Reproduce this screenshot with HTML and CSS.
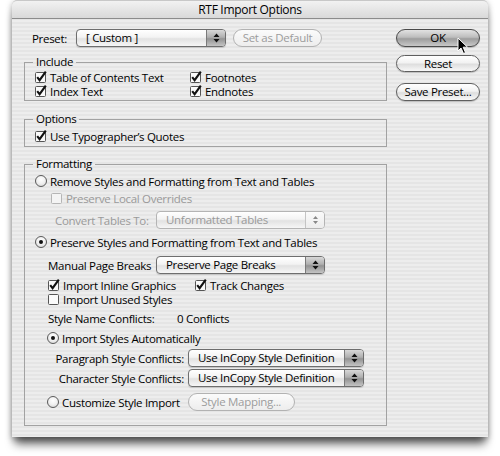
FILE: index.html
```html
<!DOCTYPE html>
<html>
<head>
<meta charset="utf-8">
<title>RTF Import Options</title>
<link rel="stylesheet" href="styles.css">
</head>
<body>
<div class="window">
  <div class="titlebar">RTF Import Options</div>
  <div class="content">
    <div class="left">
      <div class="preset-row">
        <span class="preset-label">Preset:</span>
        <div class="popup popup-preset"><span class="popup-text">[ Custom ]</span><span class="popup-arrows"><svg width="7" height="10" viewBox="0 0 7 10"><path d="M3.5 0.5 L6.5 4 L0.5 4 Z M0.5 6 L6.5 6 L3.5 9.5 Z" fill="#111"/></svg></span></div>
        <div class="btn btn-disabled btn-default">Set as Default</div>
      </div>

      <fieldset class="group group-include">
        <legend>Include</legend>
        <div class="row r14 first1">
          <div class="opt col-include"><svg class="cb" width="12" height="12" viewBox="0 0 12 12"><rect x="0.5" y="1.5" width="10" height="10" rx="1" fill="#fafafa" stroke="#555"/><path d="M2.2 6.2 L4.6 9.2 L10.8 0.6" fill="none" stroke="#111" stroke-width="2.1"/></svg><span>Table of Contents Text</span></div>
          <div class="opt"><svg class="cb" width="12" height="12" viewBox="0 0 12 12"><rect x="0.5" y="1.5" width="10" height="10" rx="1" fill="#fafafa" stroke="#555"/><path d="M2.2 6.2 L4.6 9.2 L10.8 0.6" fill="none" stroke="#111" stroke-width="2.1"/></svg><span>Footnotes</span></div>
        </div>
        <div class="row r14">
          <div class="opt col-include"><svg class="cb" width="12" height="12" viewBox="0 0 12 12"><rect x="0.5" y="1.5" width="10" height="10" rx="1" fill="#fafafa" stroke="#555"/><path d="M2.2 6.2 L4.6 9.2 L10.8 0.6" fill="none" stroke="#111" stroke-width="2.1"/></svg><span>Index Text</span></div>
          <div class="opt"><svg class="cb" width="12" height="12" viewBox="0 0 12 12"><rect x="0.5" y="1.5" width="10" height="10" rx="1" fill="#fafafa" stroke="#555"/><path d="M2.2 6.2 L4.6 9.2 L10.8 0.6" fill="none" stroke="#111" stroke-width="2.1"/></svg><span>Endnotes</span></div>
        </div>
      </fieldset>

      <fieldset class="group group-options">
        <legend>Options</legend>
        <div class="row r14 first3">
          <div class="opt"><svg class="cb" width="12" height="12" viewBox="0 0 12 12"><rect x="0.5" y="1.5" width="10" height="10" rx="1" fill="#fafafa" stroke="#555"/><path d="M2.2 6.2 L4.6 9.2 L10.8 0.6" fill="none" stroke="#111" stroke-width="2.1"/></svg><span>Use Typographer’s Quotes</span></div>
        </div>
      </fieldset>

      <fieldset class="group group-format">
        <legend>Formatting</legend>
        <div class="row r14 first3">
          <div class="opt"><span class="radio"></span><span class="rtext">Remove Styles and Formatting from Text and Tables</span></div>
        </div>
        <div class="row r14 g3 ind16">
          <div class="opt disabled"><svg class="cb" width="12" height="12" viewBox="0 0 12 12"><rect x="0.5" y="1.5" width="10" height="10" rx="1" fill="#f4f4f4" stroke="#b5b5b5"/></svg><span>Preserve Local Overrides</span></div>
        </div>
        <div class="row r18 g6">
          <span class="flabel ind20 disabled">Convert Tables To:</span>
          <div class="popup popup-wide popup-disabled"><span class="popup-text">Unformatted Tables</span><span class="popup-arrows"><svg width="7" height="10" viewBox="0 0 7 10"><path d="M3.5 1 L6 4 L1 4 Z M1 6 L6 6 L3.5 9 Z" fill="#888"/></svg></span></div>
        </div>
        <div class="row r14 g6">
          <div class="opt"><span class="radio on"></span><span class="rtext">Preserve Styles and Formatting from Text and Tables</span></div>
        </div>
        <div class="row r18 g7">
          <span class="flabel ind13">Manual Page Breaks</span>
          <div class="popup popup-wide"><span class="popup-text">Preserve Page Breaks</span><span class="popup-arrows"><svg width="7" height="10" viewBox="0 0 7 10"><path d="M3.5 0.5 L6.5 4 L0.5 4 Z M0.5 6 L6.5 6 L3.5 9.5 Z" fill="#111"/></svg></span></div>
        </div>
        <div class="row r14 g4 ind13">
          <div class="opt col-graphics"><svg class="cb" width="12" height="12" viewBox="0 0 12 12"><rect x="0.5" y="1.5" width="10" height="10" rx="1" fill="#fafafa" stroke="#555"/><path d="M2.2 6.2 L4.6 9.2 L10.8 0.6" fill="none" stroke="#111" stroke-width="2.1"/></svg><span>Import Inline Graphics</span></div>
          <div class="opt"><svg class="cb" width="12" height="12" viewBox="0 0 12 12"><rect x="0.5" y="1.5" width="10" height="10" rx="1" fill="#fafafa" stroke="#555"/><path d="M2.2 6.2 L4.6 9.2 L10.8 0.6" fill="none" stroke="#111" stroke-width="2.1"/></svg><span>Track Changes</span></div>
        </div>
        <div class="row r14 ind13">
          <div class="opt"><svg class="cb" width="12" height="12" viewBox="0 0 12 12"><rect x="0.5" y="1.5" width="10" height="10" rx="1" fill="#fafafa" stroke="#555"/></svg><span>Import Unused Styles</span></div>
        </div>
        <div class="row r14 g5 ind13">
          <span class="conf-label">Style Name Conflicts:</span><span>0 Conflicts</span>
        </div>
        <div class="row r14 g6 ind12">
          <div class="opt"><span class="radio on"></span><span class="rtext">Import Styles Automatically</span></div>
        </div>
        <div class="row r18 g4">
          <span class="rlabel">Paragraph Style Conflicts:</span>
          <div class="popup popup-style"><span class="popup-text">Use InCopy Style Definition</span><span class="popup-arrows"><svg width="7" height="10" viewBox="0 0 7 10"><path d="M3.5 0.5 L6.5 4 L0.5 4 Z M0.5 6 L6.5 6 L3.5 9.5 Z" fill="#111"/></svg></span></div>
        </div>
        <div class="row r18 g2">
          <span class="rlabel">Character Style Conflicts:</span>
          <div class="popup popup-style"><span class="popup-text">Use InCopy Style Definition</span><span class="popup-arrows"><svg width="7" height="10" viewBox="0 0 7 10"><path d="M3.5 0.5 L6.5 4 L0.5 4 Z M0.5 6 L6.5 6 L3.5 9.5 Z" fill="#111"/></svg></span></div>
        </div>
        <div class="row r18 g6 ind12">
          <div class="opt col-custom"><span class="radio"></span><span class="rtext">Customize Style Import</span></div>
          <div class="btn btn-disabled btn-mapping">Style Mapping...</div>
        </div>
      </fieldset>
    </div>

    <div class="right">
      <div class="btn btn-primary btn-ok">OK</div>
      <div class="btn btn-reset">Reset</div>
      <div class="btn btn-save">Save Preset...</div>
    </div>
  </div>
  <svg class="cursor" width="12" height="18" viewBox="0 0 12 18"><path d="M1 1 L1 14 L4 11 L6.5 16.5 L8.5 15.6 L6.2 10.2 L10.5 10.2 Z" fill="#000" stroke="#fff" stroke-width="1"/></svg>
</div>
</body>
</html>
```
FILE: styles.css
```css
html, body {
  margin: 0;
  padding: 0;
}
body {
  width: 500px;
  height: 456px;
  overflow: hidden;
  background: #ffffff;
  font-family: "Open Sans", "DejaVu Sans", sans-serif;
  font-size: 11.5px;
  letter-spacing: -0.3px;
  color: #000;
}
.window {
  position: relative;
  margin: 1px 12px 0 12px;
  width: 476px;
  height: 437px;
  border-radius: 5px 5px 0 0;
  background: repeating-linear-gradient(to bottom, #ededed 0, #ededed 2px, #e5e5e5 2px, #e5e5e5 4px);
  box-shadow: 0 10px 10px -3px rgba(0,0,0,0.6), 0 2px 6px rgba(0,0,0,0.35);
}
.titlebar {
  height: 17px;
  line-height: 17px;
  text-align: center;
  font-size: 12px;
  border-radius: 5px 5px 0 0;
  background: linear-gradient(to bottom, #f2f2f2, #d9d9d9);
  border-bottom: 1px solid #8c8c8c;
  border-top: 1px solid #c8c8c8;
  margin-top: -1px;
}
.content {
  display: flex;
  padding: 10px 8px 0 12px;
}
.left {
  width: 363px;
}
.right {
  width: 84px;
  margin-left: 9px;
  display: flex;
  flex-direction: column;
}

/* preset row */
.preset-row {
  display: flex;
  align-items: center;
  height: 18px;
}
.preset-label {
  width: 52px;
  padding-left: 8px;
  box-sizing: border-box;
  flex: none;
}

/* popup menus */
.popup {
  flex: none;
  display: flex;
  height: 18px;
  box-sizing: border-box;
  border: 1px solid #6e6e6e;
  border-radius: 4px;
  background: linear-gradient(to bottom, #ffffff 0%, #f3f3f3 45%, #e2e2e2 55%, #f6f6f6 100%);
  overflow: hidden;
  box-shadow: 0 1px 1px rgba(0,0,0,0.15);
}
.popup-text {
  flex: 1;
  padding-left: 9px;
  line-height: 16px;
  white-space: nowrap;
}
.popup-arrows {
  width: 18px;
  display: flex;
  align-items: center;
  justify-content: center;
  border-left: 1px solid #7a7a7a;
  background: linear-gradient(to bottom, #d8d8d8 0%, #b0b0b0 45%, #939393 55%, #c4c4c4 100%);
}
.popup-preset {
  width: 150px;
}
.popup-wide {
  width: 169px;
}
.popup-style {
  width: 176px;
  margin-left: 4px;
}
.popup-disabled {
  border-color: #b4b4b4;
  color: #9a9a9a;
  box-shadow: none;
}
.popup-disabled .popup-arrows {
  border-left-color: #c4c4c4;
  background: linear-gradient(to bottom, #fafafa, #ececec);
}

/* buttons */
.btn {
  flex: none;
  height: 18px;
  box-sizing: border-box;
  border: 1px solid #5f5f5f;
  border-radius: 9px;
  text-align: center;
  line-height: 16px;
  background: linear-gradient(to bottom, #ffffff 0%, #f2f2f2 45%, #dedede 55%, #f8f8f8 100%);
  box-shadow: 0 1px 1px rgba(0,0,0,0.2);
  white-space: nowrap;
}
.btn-disabled {
  border-color: #b2b2b2;
  color: #9c9c9c;
  box-shadow: none;
  background: linear-gradient(to bottom, #fbfbfb, #ededed);
}
.btn-default {
  width: 89px;
  margin-left: 7px;
}
.btn-primary {
  border-color: #4a4a4a;
  background: linear-gradient(to bottom, #e2e2e2 0%, #bdbdbd 45%, #9d9d9d 55%, #c8c8c8 100%);
}
.btn-ok {
  height: 18px;
}
.btn-reset {
  margin-top: 8px;
  height: 17px;
  line-height: 15px;
}
.btn-save {
  margin-top: 11px;
}
.btn-mapping {
  width: 107px;
  margin-left: 8px;
}

/* group boxes */
.group {
  margin: 0;
  border: 1px solid #a2a2a2;
  padding: 0 0 0 10px;
  min-width: 0;
}
.group legend {
  padding: 0 3px;
  margin-left: -2px;
  line-height: 14px;
  height: 14px;
}
.group-include {
  margin-top: 8px;
  padding-bottom: 2px;
}
.group-options {
  margin-top: 11px;
  padding-bottom: 3px;
}
.group-format {
  margin-top: 10px;
  padding-bottom: 14px;
}

/* rows */
.row {
  display: flex;
  align-items: center;
  white-space: nowrap;
  line-height: 13px;
}
.r13 { height: 13px; }
.r14 { height: 14px; }
.r18 { height: 18px; }
.first1 { margin-top: 1px; }
.first3 { margin-top: 3px; }
.g2 { margin-top: 2px; }
.g3 { margin-top: 3px; }
.g4 { margin-top: 4px; }
.g5 { margin-top: 5px; }
.g6 { margin-top: 6px; }
.g7 { margin-top: 7px; }
.ind12 { padding-left: 12px; }
.ind13 { padding-left: 13px; }
.ind16 { padding-left: 16px; }

.opt {
  display: flex;
  align-items: center;
  flex: none;
}
.cb {
  flex: none;
  margin-right: 3px;
}
.col-include { width: 155px; }
.col-graphics { width: 147px; }
.col-custom { min-width: 127px; }

.radio {
  flex: none;
  width: 12px;
  height: 12px;
  box-sizing: border-box;
  border: 1px solid #5a5a5a;
  border-radius: 50%;
  background: radial-gradient(circle at 50% 35%, #ffffff 0%, #f0f0f0 50%, #cfcfcf 100%);
  display: flex;
  align-items: center;
  justify-content: center;
}
.radio.on::after {
  content: "";
  width: 4px;
  height: 4px;
  border-radius: 50%;
  background: #111;
}
.rtext {
  margin-left: 3px;
}

.flabel {
  width: 121px;
  box-sizing: border-box;
  flex: none;
}
.ind20 { padding-left: 20px; }
.flabel.ind13 { padding-left: 13px; }
.conf-label {
  width: 129px;
}
.rlabel {
  width: 149px;
  text-align: right;
  flex: none;
}
.disabled {
  color: #9a9a9a;
}

.cursor {
  position: absolute;
  left: 445px;
  top: 37px;
}
```
